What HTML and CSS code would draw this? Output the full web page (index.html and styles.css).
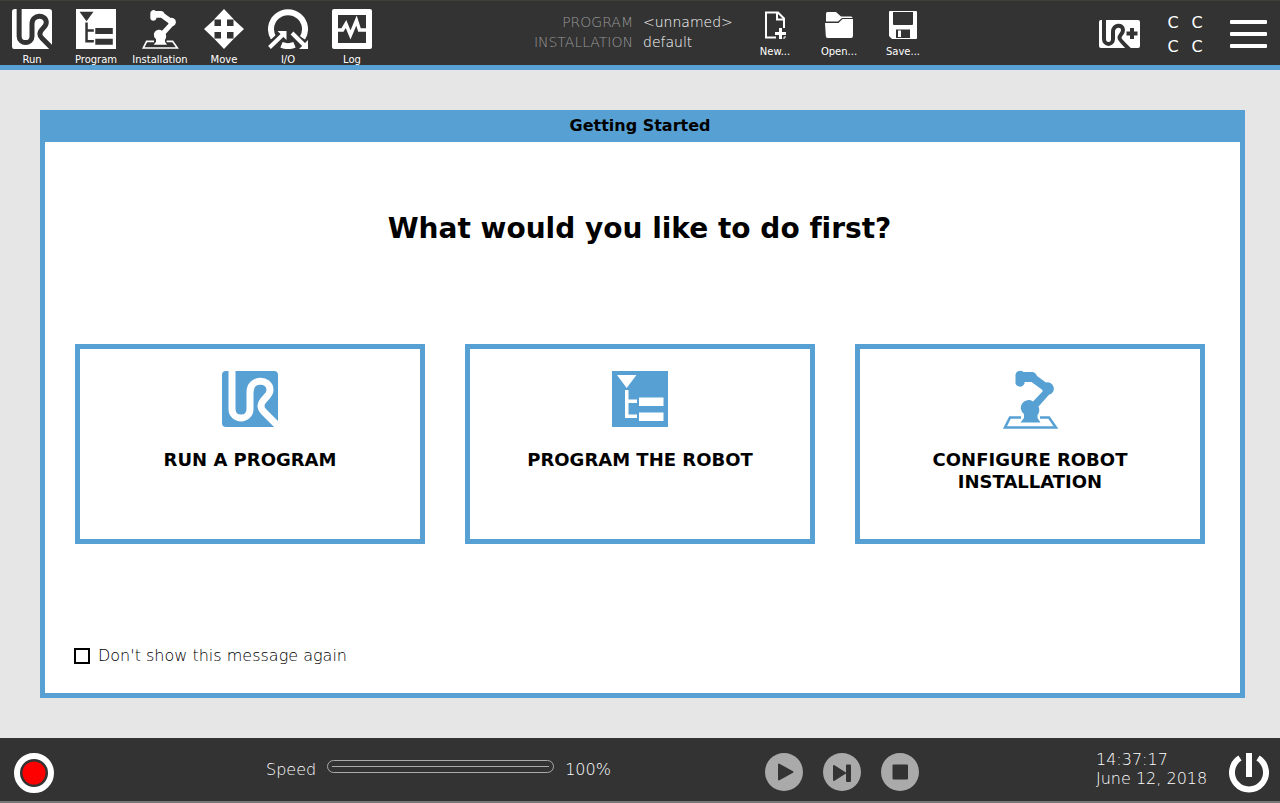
FILE: index.html
```html
<!DOCTYPE html>
<html lang="en">
<head>
<meta charset="utf-8">
<title>Getting Started</title>
<link rel="stylesheet" href="styles.css">
</head>
<body>
<svg class="sprite" aria-hidden="true">
  <symbol id="ur" viewBox="0 0 56 56">
    <rect width="56" height="56" rx="4" fill="currentColor"/>
    <path class="cut" d="M10 -3V38C10 50 28 50 28 38V21C28 7 48 7 48 19C48 26 39 28 39 35C39 37 40 39 42 41L61 60" fill="none" stroke-width="7"/>
  </symbol>
  <symbol id="program" viewBox="0 0 56 56">
    <rect width="56" height="56" fill="currentColor"/>
    <path class="cut-fill" d="M5 4H24.500L14.700 17ZM13 19H16.500V28.500H25V32H16.500V43.500H25V47H13ZM27 26.500H51.500V35H27ZM27 41.500H51.500V50H27Z"/>
  </symbol>
  <symbol id="robot" viewBox="0 0 56 60">
    <path d="M13.500 5.500a4.800 4.800 0 0 1 8-2.500H30q3.500 0 5 4L44 13.500a6.300 6.300 0 1 1 3 12.300L36.500 37.500q2 5-1 8.500V49l3 4.500H18.500L22 49V45a7.200 7.200 0 0 1 9-12.500L40.500 22.500V21L29.500 13H22.500v1.500a4.800 4.800 0 0 1-9 0Z" fill="currentColor"/>
    <path d="M19 48.500H8L3 58.500H54L47 48.500H38" fill="none" stroke="currentColor" stroke-width="2.500"/>
  </symbol>
</svg>

<header class="topbar">
  <nav class="tabs" aria-label="Main">
    <a class="tab" href="#run"><svg class="icon"><use href="#ur"/></svg>Run</a>
    <a class="tab" href="#program-tab"><svg class="icon"><use href="#program"/></svg>Program</a>
    <a class="tab" href="#installation"><svg class="icon"><use href="#robot"/></svg>Installation</a>
    <a class="tab" href="#move"><svg class="icon" viewBox="0 0 40 40"><path fill="currentColor" d="M20 0L30 10.500H23V17H29.500V10.500L40 20L29.500 30V23H23V29.500H30L20 40L10 29.500H17V23H10.500V30L0 20L10.500 10.500V17H17V10.500H10Z"/></svg>Move</a>
    <a class="tab" href="#io"><svg class="icon" viewBox="0 0 40 40"><path d="M5.500 29A17 17 0 1 1 34.500 29M13.500 35.800Q20 38.500 26.500 35.800" fill="none" stroke="currentColor" stroke-width="6"/><path class="cut" d="M0 38.500L17 22M24 24L40 40" fill="none" stroke-width="7"/><path d="M1.500 38.500L15 25.500M24 24L36 36" fill="none" stroke="currentColor" stroke-width="4"/><path d="M9.500 22H18.500V31ZM40 31V40H31Z" fill="currentColor"/></svg>I/O</a>
    <a class="tab" href="#log"><svg class="icon" viewBox="0 0 40 40"><rect width="40" height="40" rx="2" fill="currentColor"/><path class="cut-fill" d="M6 6H34V34H6Z"/><path d="M6 21H10.500L14 15L18.500 26L24.500 11.500L27.500 21H34" fill="none" stroke="currentColor" stroke-width="3.500"/></svg>Log</a>
  </nav>
  <dl class="info">
    <dt>PROGRAM</dt><dd>&lt;unnamed&gt;</dd>
    <dt>INSTALLATION</dt><dd>default</dd>
  </dl>
  <div class="files">
    <button class="file" type="button"><svg class="file-icon" viewBox="0 0 28 28"><path d="M15 26.500H5V1.500H17L23 7.500V17" fill="none" stroke="currentColor" stroke-width="2"/><path d="M16 1V8.500H23.500" fill="none" stroke="currentColor" stroke-width="2"/><path d="M19.500 17V28M14 22.500H25" stroke="currentColor" stroke-width="3"/><path d="M22 27H24V25" fill="none" stroke="currentColor" stroke-width="1"/></svg>New...</button>
    <button class="file" type="button"><svg class="file-icon" viewBox="0 0 28 28"><path d="M1 10.500L1 2.500Q1 1 2.500 1H11L16 5.500H26Q27.500 5.500 27.500 7H17L13 10.500Z" fill="currentColor"/><path d="M0 12H13.500L17.500 8H28V25Q28 27 26 27H2.500Q1 27 .8 25Z" fill="currentColor"/></svg>Open...</button>
    <button class="file" type="button"><svg class="file-icon" viewBox="0 0 28 28"><path d="M1 0H27Q28 0 28 1V27Q28 28 27 28H3L0 25V1Q0 0 1 0Z" fill="currentColor"/><path class="cut-fill" d="M4 1H24V13Q24 14 23 14H5Q4 14 4 13ZM7 18.500H21V27H7Z"/><path d="M9 19.500H12V26H9Z" fill="currentColor"/></svg>Save...</button>
  </div>
  <div class="status">
    <button class="plain" type="button" aria-label="UR+"><svg class="urplus" viewBox="0 0 41 28"><rect width="41" height="28" rx="2" fill="currentColor"/><path class="cut" d="M5 -1V19C5 25.500 14 25.500 14 19V12C14 4 24 4 24 10C24 14 20.500 14.500 20.500 18C20.500 20 29 28 31 30" fill="none" stroke-width="4"/><path class="cut" d="M33 8V19M27.500 13.500H38.500" stroke-width="4"/></svg></button>
    <div class="checksum"><span>C</span><span>C</span><span>C</span><span>C</span></div>
    <button class="menu" type="button" aria-label="Menu"><i></i><i></i><i></i></button>
  </div>
</header>

<main class="stage">
  <section class="dialog">
    <h1 class="title">Getting Started</h1>
    <div class="content">
      <h2 class="question">What would you like to do first?</h2>
      <div class="cards">
        <button class="card" type="button"><svg class="card-icon"><use href="#ur"/></svg><span>RUN A PROGRAM</span></button>
        <button class="card" type="button"><svg class="card-icon"><use href="#program"/></svg><span>PROGRAM THE ROBOT</span></button>
        <button class="card" type="button"><svg class="card-icon robot"><use href="#robot"/></svg><span>CONFIGURE ROBOT INSTALLATION</span></button>
      </div>
      <label class="again"><input type="checkbox">Don't show this message again</label>
    </div>
  </section>
</main>

<footer class="bottombar">
  <button class="record" type="button" aria-label="Robot state"><svg class="icon" viewBox="0 0 40 40"><circle cx="20" cy="20" r="17" fill="none" stroke="currentColor" stroke-width="6"/><circle cx="20" cy="20" r="11.500" fill="#f00"/></svg></button>
  <div class="speed">
    <label for="speed">Speed</label>
    <input id="speed" type="range" min="0" max="100" value="100">
    <output for="speed">100%</output>
  </div>
  <div class="playback">
    <button class="plain" type="button" aria-label="Play"><svg class="round" viewBox="0 0 38 38"><circle cx="19" cy="19" r="19" fill="currentColor"/><path class="cut cut-fill" d="M14 11.500V26.500L27.500 19Z" stroke-width="2" stroke-linejoin="round"/></svg></button>
    <button class="plain" type="button" aria-label="Step"><svg class="round" viewBox="0 0 38 38"><circle cx="19" cy="19" r="19" fill="currentColor"/><path class="cut cut-fill" d="M11 13V27L22 20ZM24 12.500H27V28H24Z" stroke-width="2" stroke-linejoin="round"/></svg></button>
    <button class="plain" type="button" aria-label="Stop"><svg class="round" viewBox="0 0 38 38"><circle cx="19" cy="19" r="19" fill="currentColor"/><rect class="cut-fill" x="11.500" y="11.500" width="15.500" height="15" rx="1"/></svg></button>
  </div>
  <div class="end">
    <div class="clock"><time>14:37:17</time><time>June 12, 2018</time></div>
    <button class="plain" type="button" aria-label="Power"><svg class="icon" viewBox="0 0 40 40"><path d="M11 5A17 17 0 1 0 29 5" fill="none" stroke="currentColor" stroke-width="6"/><path d="M20 0V24" stroke="currentColor" stroke-width="6"/></svg></button>
  </div>
</footer>
</body>
</html>
```
FILE: styles.css
```css
* {
  box-sizing: border-box;
}

body {
  --blue: #56a0d3;
  --dark: #333;
  --back: var(--dark);
  display: flex;
  flex-direction: column;
  min-height: 100vh;
  margin: 0;
  background: #e6e6e6;
  color: #000;
  font: 16px/20px "DejaVu Sans", sans-serif;
  font-variant-ligatures: none;
}

button {
  margin: 0;
  padding: 0;
  border: 0;
  background: none;
  color: inherit;
  font: inherit;
}

svg {
  display: block;
}

.sprite {
  display: none;
}

.cut {
  stroke: var(--back);
}

.cut-fill {
  fill: var(--back);
}

.icon {
  width: 40px;
  height: 40px;
}

.topbar {
  display: grid;
  grid-template-columns: 384fr 359fr 356fr 181fr;
  height: 70px;
  border-top: 1px solid #40403a;
  border-bottom: 5px solid var(--blue);
  background: var(--dark);
  color: #fff;
}

.tabs,
.files {
  display: flex;
}

.tab,
.file {
  display: flex;
  flex-direction: column;
  align-items: center;
  width: 64px;
  padding-top: 8px;
  color: #fff;
  font-size: 10px;
  line-height: 12px;
  text-decoration: none;
}

.tab {
  gap: 5px;
}

.file {
  gap: 7px;
  padding-top: 10px;
}

.file-icon {
  width: 28px;
  height: 28px;
}

.info {
  display: grid;
  grid-template-columns: 1fr 100px;
  column-gap: 10px;
  align-content: start;
  margin: 0;
  padding-top: 11px;
  font-size: 14px;
  font-weight: 200;
}

.info dt {
  color: #999;
  text-align: right;
}

.info dd {
  margin: 0;
}

.status {
  display: flex;
  justify-content: space-between;
  align-items: center;
  padding-right: 13px;
}

.urplus {
  width: 41px;
  height: 28px;
}

.checksum {
  display: grid;
  grid-template-columns: 24px 24px;
  padding-top: 3px;
  line-height: 24px;
  text-align: center;
}

.menu {
  display: grid;
  gap: 8px;
  width: 37px;
}

.menu i {
  height: 4px;
  border-radius: 1px;
  background: #fff;
}

.stage {
  display: flex;
  flex: 1;
  padding: 40px 35px 40px 40px;
}

.dialog {
  display: flex;
  flex: 1;
  flex-direction: column;
  border: 5px solid var(--blue);
  border-top: 0;
  background: #fff;
}

.title {
  margin: 0;
  padding-right: 5px;
  background: var(--blue);
  font-size: 16px;
  font-weight: 700;
  line-height: 32px;
  text-align: center;
}

.content {
  display: flex;
  flex: 1;
  flex-direction: column;
  padding: 69px 35px 27px 29px;
}

.question {
  margin: 0;
  font-size: 28px;
  line-height: 36px;
  text-align: center;
}

.cards {
  display: grid;
  grid-template-columns: repeat(3, 1fr);
  gap: 40px;
  margin-top: 97px;
  margin-left: 1px;
}

.card {
  --back: #fff;
  display: flex;
  flex-direction: column;
  align-items: center;
  gap: 22px;
  height: 200px;
  padding: 22px 40px;
  border: 5px solid var(--blue);
  font-size: 18px;
  font-weight: 700;
  line-height: 22px;
}

.card-icon {
  width: 56px;
  height: 56px;
  color: var(--blue);
}

.card-icon.robot {
  height: 60px;
  margin: -2px 0;
}

.again {
  display: flex;
  align-items: center;
  align-self: flex-start;
  gap: 8px;
  margin-top: auto;
  font-weight: 200;
}

.again input {
  width: 16px;
  height: 16px;
  margin: 0;
  border: 2px solid #000;
  background: #fff;
  appearance: none;
}

.again input:checked {
  background: #000;
}

.bottombar {
  display: grid;
  grid-template-columns: 266fr 499fr 331fr 184fr;
  align-items: start;
  height: 65px;
  padding-top: 15px;
  border-bottom: 2px solid #777;
  background: var(--dark);
  color: #fff;
  font-weight: 200;
}

.record {
  justify-self: start;
  margin-left: 14px;
}

.speed {
  display: flex;
  align-items: flex-start;
  gap: 11px;
  padding-top: 7px;
}

.speed input {
  width: 227px;
  height: 13px;
  margin: 0;
  border: 1px solid #aaa;
  border-radius: 7px;
  background: linear-gradient(#aaa, #aaa) center / calc(100% - 8px) 1px no-repeat;
  appearance: none;
}

.speed input::-webkit-slider-thumb {
  width: 1px;
  height: 1px;
  appearance: none;
}

.playback {
  display: flex;
  gap: 20px;
  color: #aaa;
}

.round {
  width: 38px;
  height: 38px;
}

.end {
  display: flex;
  justify-content: space-between;
  align-items: flex-start;
  padding-right: 11px;
}

.clock {
  display: grid;
  margin-top: -3px;
  line-height: 19px;
}
```
